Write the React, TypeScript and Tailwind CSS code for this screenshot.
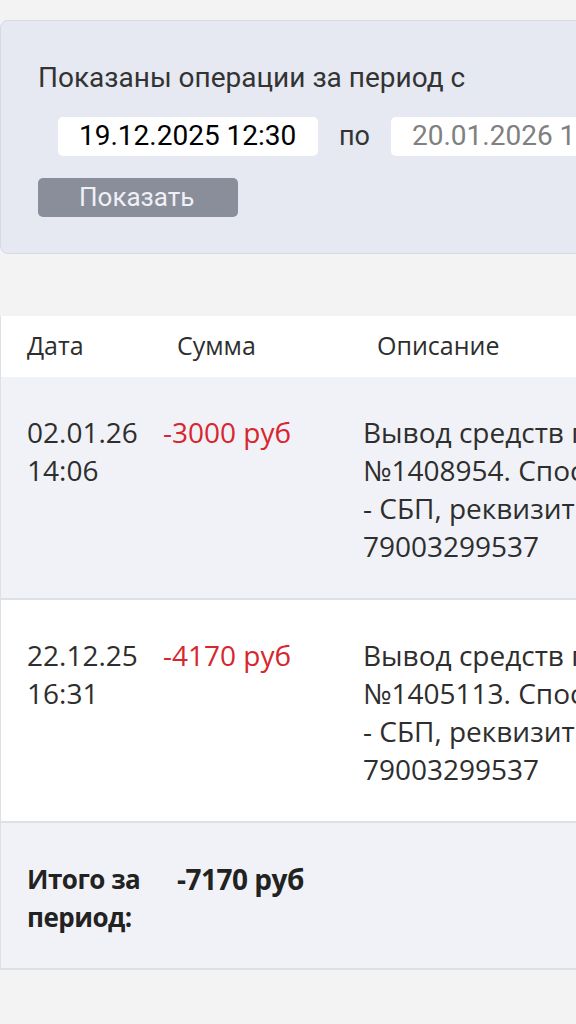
const rows = [
  {
    date: ['02.01.26', '14:06'],
    sum: '-3000 руб',
    desc: ['Вывод средств по заявке', '№1408954. Способ вывода', '- СБП, реквизиты:', '79003299537'],
    bg: 'bg-[#f1f2f7]',
  },
  {
    date: ['22.12.25', '16:31'],
    sum: '-4170 руб',
    desc: ['Вывод средств по заявке', '№1405113. Способ вывода', '- СБП, реквизиты:', '79003299537'],
    bg: 'bg-white',
  },
]

export default function App() {
  return (
    <div className="w-[576px] h-[1024px] overflow-hidden bg-[#f3f3f4]">
      <div className="w-[800px] pt-[20px]">
        {/* Period filter */}
        <div
          className="border border-[#d6d9e1] rounded-[8px] bg-[#e6e9f2] pl-[37px] pt-[42px] pb-[36px] text-[#333]"
          style={{ fontFamily: 'Roboto, "Noto Sans", sans-serif' }}
        >
          <p className="text-[28px] leading-[30px]">Показаны операции за период с</p>
          <div className="flex items-center mt-[23px] ml-[20px] gap-[21px]">
            <div className="w-[260px] h-[39px] bg-white rounded-[5px] pl-[21px] flex items-center text-[28px] text-black">
              19.12.2025 12:30
            </div>
            <span className="text-[27px]">по</span>
            <div className="w-[260px] h-[39px] bg-white rounded-[5px] pl-[21px] flex items-center text-[28px] text-[#808080]">
              20.01.2026 12:30
            </div>
          </div>
          <button className="mt-[21px] w-[200px] h-[39px] rounded-[5px] bg-[#8a8e9b] text-[#eff0f5] text-[26px] text-left pl-[41px]">
            Показать
          </button>
        </div>

        {/* Operations table */}
        <div
          className="mt-[62px] border-l border-[#dfe0e6] text-[#2e2e2e]"
          style={{ fontFamily: '"Open Sans", "Noto Sans", sans-serif' }}
        >
          <div className="grid grid-cols-[150px_200px_1fr] h-[61px] items-center bg-white text-[25px]">
            <div className="pl-[26px]">Дата</div>
            <div className="pl-[26px]">Сумма</div>
            <div className="pl-[26px]">Описание</div>
          </div>
          {rows.map((r, i) => (
            <div
              key={i}
              className={`grid grid-cols-[150px_200px_1fr] pt-[36px] pb-[33px] border-b-2 border-[#dfe0e6] text-[28px] leading-[38px] ${r.bg}`}
            >
              <div className="pl-[26px]">
                {r.date.map((d) => (
                  <div key={d}>{d}</div>
                ))}
              </div>
              <div className="pl-[12px] text-[#d7262e] whitespace-nowrap">{r.sum}</div>
              <div className="pl-[12px] whitespace-nowrap">
                {r.desc.map((d, j) => (
                  <div key={j}>{d}</div>
                ))}
              </div>
            </div>
          ))}
          <div className="grid grid-cols-[150px_200px_1fr] pt-[37px] pb-[32px] border-b-2 border-[#dfe0e6] bg-[#f1f2f7] leading-[38px] font-bold text-[#222]">
            <div className="pl-[26px] text-[26px] tracking-[-0.5px]">
              <div>Итого за</div>
              <div>период:</div>
            </div>
            <div className="pl-[26px] text-[28px] tracking-[-0.5px] whitespace-nowrap">-7170 руб</div>
            <div />
          </div>
        </div>
      </div>
    </div>
  )
}
